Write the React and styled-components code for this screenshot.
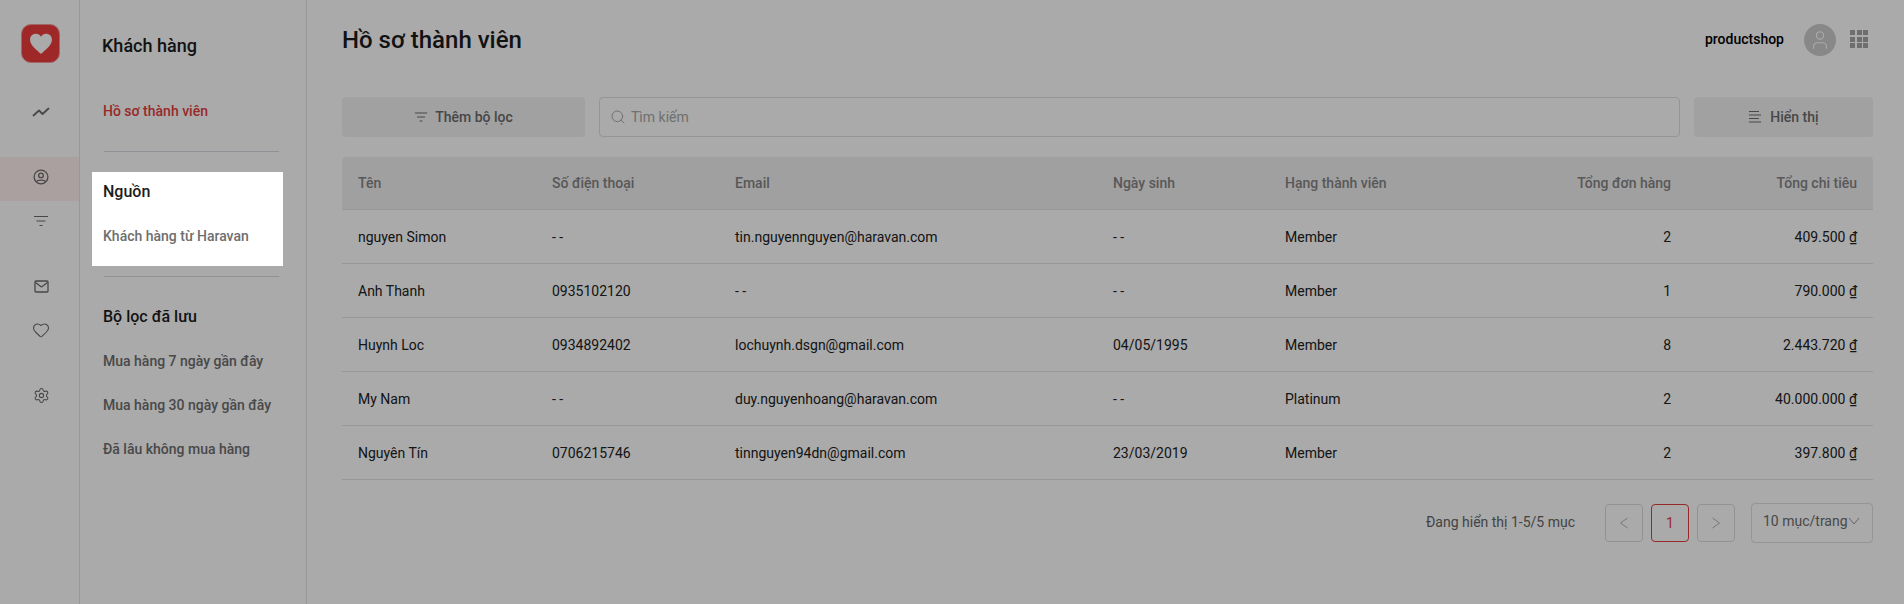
import React from 'react';
import styled, { createGlobalStyle } from 'styled-components';
import { Heart, Settings, Search, User } from 'lucide-react';

const GlobalStyle = createGlobalStyle`
    html, body {
        margin: 0;
        background: #fff;
        font-family: Roboto, "Noto Sans", sans-serif;
        color: #212121;
    }
    * {
        box-sizing: border-box;
    }
`;

const Page = styled.div`
    display: flex;
    width: 100%;
    height: 100vh;
    overflow: hidden;
`;

const Rail = styled.nav`
    width: 80px;
    flex-shrink: 0;
    border-right: 1px solid #e4e4e4;
    padding-top: 24px;
`;

const Logo = styled.div`
    width: 39px;
    height: 39px;
    margin: 0 0 29px 21px;
    border-radius: 10px;
    background: #ee3d3d;
    border: 1px solid #f49a9a;
    display: flex;
    align-items: center;
    justify-content: center;
`;

const RailItem = styled.div`
    height: 44px;
    margin-bottom: ${p => p.$gap ? '21px' : '0'};
    padding: 0 0 4px 3px;
    display: flex;
    align-items: center;
    justify-content: center;
    color: #6b6b6b;
    background: ${p => p.$active ? '#fff0f0' : 'transparent'};
`;

const Panel = styled.aside`
    width: 227px;
    flex-shrink: 0;
    border-right: 1px solid #e4e4e4;
`;

const PanelTitle = styled.div`
    height: 89px;
    padding: 2px 0 0 22px;
    display: flex;
    align-items: center;
    font-size: 18px;
    font-weight: 500;
    color: #1c1c1c;
`;

const PanelItem = styled.div`
    height: 44px;
    padding-left: ${p => p.$flush ? '11px' : '23px'};
    display: flex;
    align-items: center;
    font-size: 14px;
    font-weight: 500;
    color: ${p => p.$active ? '#e53e3e' : '#6e6e6e'};
`;

const Divider = styled.div`
    height: 1px;
    background: #d7dae2;
    margin: ${p => p.$margin};
`;

const SectionTitle = styled.div`
    height: 38px;
    margin-bottom: 4px;
    padding-left: ${p => p.$flush ? '11px' : '23px'};
    display: flex;
    align-items: center;
    font-size: 16px;
    font-weight: 500;
    color: #1c1c1c;
`;

// tour spotlight: everything outside this box gets dimmed by its shadow
const Spotlight = styled.section`
    position: relative;
    z-index: 2;
    height: 94px;
    margin: 20px 23px 10px 12px;
    background: #fff;
    box-shadow: 0 0 0 4000px rgba(0, 0, 0, 0.333);
`;

const Main = styled.main`
    flex: 1;
    min-width: 0;
    padding: 0 31px 0 35px;
`;

const Header = styled.header`
    height: 80px;
    margin-bottom: 17px;
    display: flex;
    align-items: center;
    justify-content: space-between;
`;

const Title = styled.h1`
    margin: 0;
    font-size: 24px;
    font-weight: 500;
    color: #1c1c1c;
`;

const Account = styled.div`
    display: flex;
    align-items: center;
    padding-right: 5px;
`;

const ShopName = styled.span`
    font-size: 14px;
    font-weight: 500;
    color: #000;
    margin: 0 20px 2px 0;
`;

const Avatar = styled.div`
    width: 32px;
    height: 32px;
    margin-right: 14px;
    border-radius: 50%;
    background: #cdcdcd;
    color: #fff;
    display: flex;
    align-items: center;
    justify-content: center;
`;

const Apps = styled.div`
    display: grid;
    grid-template-columns: repeat(3, 5px);
    grid-auto-rows: 5px;
    gap: 1.500px;
    margin-bottom: 2px;
`;

const AppDot = styled.span`
    background: #a6a6a6;
`;

const Toolbar = styled.div`
    height: 40px;
    margin-bottom: 20px;
    display: flex;
    gap: 14px;
`;

const ToolButton = styled.div`
    width: ${p => p.$width};
    flex-shrink: 0;
    border-radius: 4px;
    background: #f2f2f2;
    display: flex;
    align-items: center;
    justify-content: center;
    gap: ${p => p.$gap};
    font-size: 14px;
    font-weight: 500;
    color: #6b6b6b;
`;

const SearchBox = styled.div`
    flex: 1;
    border: 1px solid #e0e0e0;
    border-radius: 4px;
    padding-left: 10px;
    display: flex;
    align-items: center;
    gap: 5px;
    font-size: 14px;
    color: #a8a8a8;
`;

const Row = styled.div`
    display: grid;
    grid-template-columns: 194px 183px 378px 172px 209px 209px 186px;
    height: 54px;
    border-bottom: 1px solid #e4e4e4;
    font-size: 14px;
    color: #212121;
`;

const HeadRow = styled(Row)`
    height: 53px;
    border-radius: 4px 4px 0 0;
    background: #f0f0f0;
    font-weight: 500;
    color: #858585;
`;

const Cell = styled.div`
    padding: 0 16px;
    display: flex;
    align-items: center;
    justify-content: ${p => p.$right ? 'flex-end' : 'flex-start'};
    white-space: nowrap;
`;

const Footer = styled.div`
    margin-top: 23px;
    display: flex;
    align-items: center;
    justify-content: flex-end;
`;

const Status = styled.span`
    margin: 0 30px 2px 0;
    font-size: 14px;
    color: #666;
`;

const PageButton = styled.div`
    width: 38px;
    height: 38px;
    margin-right: 8px;
    border: 1px solid ${p => p.$active ? '#e53e3e' : '#dcdcdc'};
    border-radius: 4px;
    display: flex;
    align-items: center;
    justify-content: center;
    font-size: 14px;
    color: ${p => p.$active ? '#e53e3e' : '#b4b4b4'};
`;

const PageSize = styled.div`
    width: 122px;
    height: 40px;
    margin-left: 8px;
    padding: 0 0 4px 11px;
    border: 1px solid #e0e0e0;
    border-radius: 4px;
    display: flex;
    align-items: center;
    font-size: 14px;
    color: #6e6e6e;
`;

const LogoHeart = () => (
    <svg width="24" height="21" viewBox="0 0 28 25">
        <path fill="#fff" d="M14 25 C9 20 1 15 1 8 C1 3.500 4.500 1 8 1 C10.500 1 12.800 2.400 14 4.500 C15.200 2.400 17.500 1 20 1 C23.500 1 27 3.500 27 8 C27 15 19 20 14 25 Z" />
    </svg>
);

const TrendIcon = () => (
    <svg width="18" height="18" viewBox="0 0 18 18" fill="none" stroke="currentColor" strokeWidth="1.800" strokeLinecap="round" strokeLinejoin="round">
        <path d="M1.500 12.500 L7 7.500 L10.500 11 L16.500 5.500" />
    </svg>
);

const ProfileIcon = () => (
    <svg width="18" height="18" viewBox="0 0 18 18" fill="none" stroke="currentColor" strokeWidth="1.300">
        <circle cx="9" cy="9" r="6.900" />
        <circle cx="9" cy="7.400" r="2.300" />
        <path d="M4.500 13.800 C5.300 11.600 12.700 11.600 13.500 13.800" />
    </svg>
);

const FilterIcon = ({ size = 16 }) => (
    <svg width={size} height={size} viewBox="0 0 16 16" fill="none" stroke="currentColor" strokeWidth="1.200">
        <path d="M1 3.500 H15 M3.500 8 H12.500 M6.500 12.500 H9.500" />
    </svg>
);

const MailIcon = () => (
    <svg width="15" height="13" viewBox="0 0 15 13" fill="none" stroke="currentColor" strokeWidth="1.300">
        <rect x="1" y="1" width="13" height="11" rx="1" />
        <path d="M1.500 2.500 L7.500 7 L13.500 2.500" />
    </svg>
);

const ColumnsIcon = () => (
    <svg width="14" height="14" viewBox="0 0 14 14" fill="none" stroke="currentColor" strokeWidth="1.100">
        <path d="M1 1.500 H11 M1 5 H13 M1 8.500 H11 M1 12 H13" />
    </svg>
);

const PrevIcon = () => (
    <svg width="10" height="12" viewBox="0 0 10 12" fill="none" stroke="currentColor" strokeWidth="1">
        <path d="M8.500 1 L1.500 6 L8.500 11" />
    </svg>
);

const NextIcon = () => (
    <svg width="10" height="12" viewBox="0 0 10 12" fill="none" stroke="currentColor" strokeWidth="1">
        <path d="M1.500 1 L8.500 6 L1.500 11" />
    </svg>
);

const CaretIcon = () => (
    <svg width="12" height="8" viewBox="0 0 12 8" fill="none" stroke="#9a9a9a" strokeWidth="1">
        <path d="M1 1 L6 7 L11 1" />
    </svg>
);

const customers = [
    ['nguyen Simon', '- -', 'tin.nguyennguyen@haravan.com', '- -', 'Member', '2', '409.500 ₫'],
    ['Anh Thanh', '0935102120', '- -', '- -', 'Member', '1', '790.000 ₫'],
    ['Huynh Loc', '0934892402', 'lochuynh.dsgn@gmail.com', '04/05/1995', 'Member', '8', '2.443.720 ₫'],
    ['My Nam', '- -', 'duy.nguyenhoang@haravan.com', '- -', 'Platinum', '2', '40.000.000 ₫'],
    ['Nguyên Tín', '0706215746', 'tinnguyen94dn@gmail.com', '23/03/2019', 'Member', '2', '397.800 ₫'],
];

const columns = ['Tên', 'Số điện thoại', 'Email', 'Ngày sinh', 'Hạng thành viên', 'Tổng đơn hàng', 'Tổng chi tiêu'];

export default function App() {
    return (
        <Page>
            <GlobalStyle />
            <Rail>
                <Logo><LogoHeart /></Logo>
                <RailItem $gap><TrendIcon /></RailItem>
                <RailItem $active><ProfileIcon /></RailItem>
                <RailItem $gap><FilterIcon /></RailItem>
                <RailItem><MailIcon /></RailItem>
                <RailItem $gap><Heart size={18} strokeWidth={1.400} /></RailItem>
                <RailItem><Settings size={17} strokeWidth={1.500} /></RailItem>
            </Rail>
            <Panel>
                <PanelTitle>Khách hàng</PanelTitle>
                <PanelItem $active>Hồ sơ thành viên</PanelItem>
                <Divider $margin="18px 27px 0 24px" />
                <Spotlight>
                    <SectionTitle $flush>Nguồn</SectionTitle>
                    <PanelItem $flush>Khách hàng từ Haravan</PanelItem>
                </Spotlight>
                <Divider $margin="0 27px 20px 24px" />
                <SectionTitle>Bộ lọc đã lưu</SectionTitle>
                <PanelItem>Mua hàng 7 ngày gần đây</PanelItem>
                <PanelItem>Mua hàng 30 ngày gần đây</PanelItem>
                <PanelItem>Đã lâu không mua hàng</PanelItem>
            </Panel>
            <Main>
                <Header>
                    <Title>Hồ sơ thành viên</Title>
                    <Account>
                        <ShopName>productshop</ShopName>
                        <Avatar><User size={22} strokeWidth={1.200} /></Avatar>
                        <Apps>
                            {Array.from({ length: 9 }).map((_, i) => <AppDot key={i} />)}
                        </Apps>
                    </Account>
                </Header>
                <Toolbar>
                    <ToolButton $width="243px" $gap="7px"><FilterIcon size={14} />Thêm bộ lọc</ToolButton>
                    <SearchBox><Search size={16} strokeWidth={1.500} />Tìm kiếm</SearchBox>
                    <ToolButton $width="179px" $gap="8px"><ColumnsIcon />Hiển thị</ToolButton>
                </Toolbar>
                <HeadRow>
                    {columns.map((c, i) => <Cell key={c} $right={i > 4}>{c}</Cell>)}
                </HeadRow>
                {customers.map(row => (
                    <Row key={row[0]}>
                        {row.map((v, i) => <Cell key={i} $right={i > 4}>{v}</Cell>)}
                    </Row>
                ))}
                <Footer>
                    <Status>Đang hiển thị 1-5/5 mục</Status>
                    <PageButton><PrevIcon /></PageButton>
                    <PageButton $active>1</PageButton>
                    <PageButton><NextIcon /></PageButton>
                    <PageSize>10 mục/trang<CaretIcon /></PageSize>
                </Footer>
            </Main>
        </Page>
    );
}
